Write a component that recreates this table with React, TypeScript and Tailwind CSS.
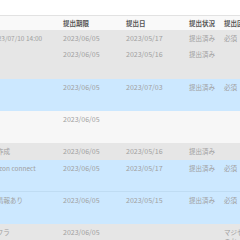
type Row = {
  title: string;
  deadline: string;
  submitted?: string;
  status?: string;
  kind?: string[];
  bg: string;
  h: string;
};

const rows: Row[] = [
  { title: "面接日時：2023/07/10 14:00", deadline: "2023/06/05", submitted: "2023/05/17", status: "提出済み", kind: ["必須"], bg: "bg-[#e6e6e6]", h: "h-4" },
  { title: "", deadline: "2023/06/05", submitted: "2023/05/16", status: "提出済み", bg: "bg-[#e6e6e6]", h: "h-[33px]" },
  { title: "職務経歴書等。", deadline: "2023/06/05", submitted: "2023/07/03", status: "提出済み", kind: ["必須"], bg: "bg-[#cce8ff]", h: "h-8" },
  { title: "", deadline: "2023/06/05", bg: "bg-[#f7f7f7]", h: "h-8" },
  { title: "研修レポート作成", deadline: "2023/06/05", submitted: "2023/05/16", status: "提出済み", bg: "bg-[#e6e6e6]", h: "h-[17px]" },
  { title: "事前学習 Amazon connect", deadline: "2023/06/05", submitted: "2023/05/17", status: "提出済み", kind: ["必須"], bg: "bg-[#cce8ff] border-b border-[#bfdcf3]", h: "h-8" },
  { title: "口座の振込先情報あり", deadline: "2023/06/05", submitted: "2023/05/15", status: "提出済み", kind: ["必須"], bg: "bg-[#cce8ff]", h: "h-8" },
  { title: "クラウドインフラ", deadline: "2023/06/05", kind: ["マジセ", "のか"], bg: "bg-[#e6e6e6]", h: "h-8" },
];

const cols = "grid grid-cols-[105px_63px_63px_35px_60px]";

export default function App() {
  return (
    <div className="w-[240px] h-[240px] overflow-hidden bg-white font-['Noto_Sans_CJK_JP','Noto_Sans',sans-serif] text-[6.5px] leading-[15px]">
      <div className="h-[15px]" />
      <div className="-ml-[45px] w-[326px]">
        <div className={`${cols} h-[15px] bg-[#f9f9f9] border-t border-[#e2e2e2] font-bold text-[#555]`}>
          <div className="px-[3px]">提出物</div>
          <div className="px-[3px]">提出期限</div>
          <div className="px-[3px]">提出日</div>
          <div className="px-[3px]">提出状況</div>
          <div className="px-[3px] whitespace-nowrap">提出区分</div>
        </div>
        {rows.map((r, i) => (
          <div key={i} className={`${cols} ${r.h} ${r.bg} text-[#a0a0a0] py-px`}>
            <div className="px-[3px] whitespace-nowrap text-[6.5px]">{r.title}</div>
            <div className="px-[3px] text-[7px]">{r.deadline}</div>
            <div className="px-[3px] text-[7px]">{r.submitted}</div>
            <div className="px-[3px] whitespace-nowrap">{r.status}</div>
            {r.kind && r.kind.length > 1 ? (
              <div className="px-[3px] pt-[3px] leading-[9px] whitespace-nowrap">
                {r.kind.map((k) => (
                  <div key={k}>{k}</div>
                ))}
              </div>
            ) : (
              <div className="px-[3px] whitespace-nowrap">{r.kind?.[0]}</div>
            )}
          </div>
        ))}
      </div>
    </div>
  );
}
